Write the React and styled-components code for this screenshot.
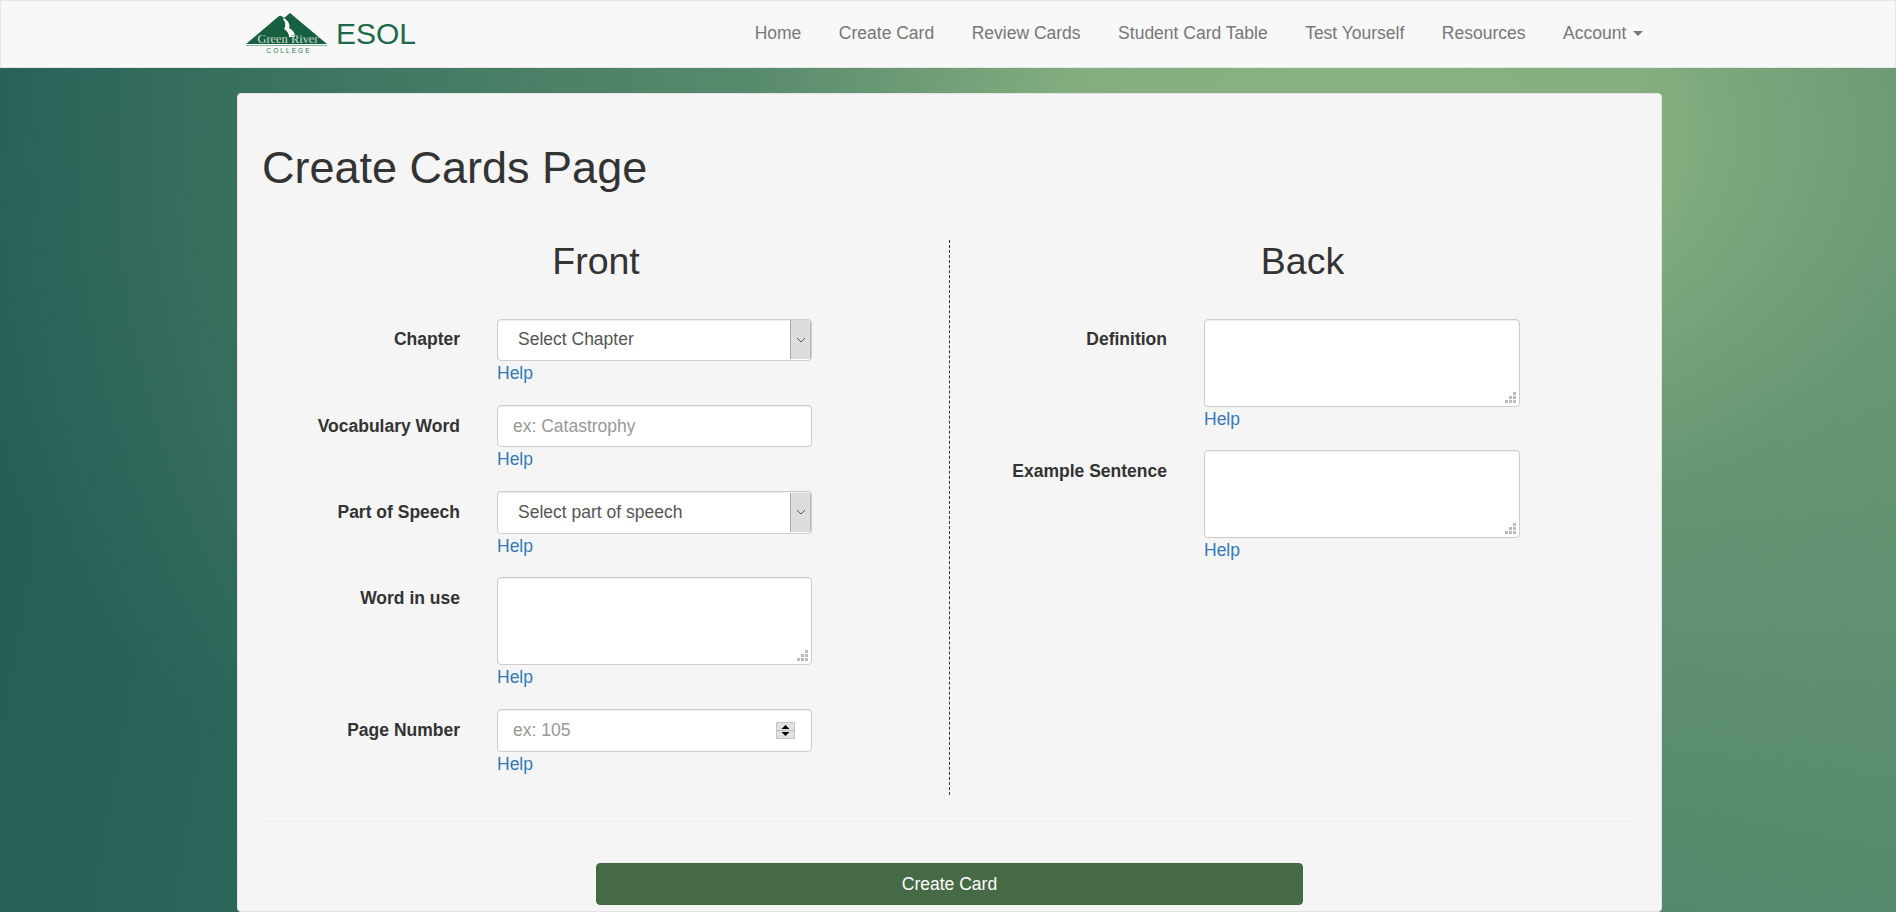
import React from "react";
import styled, { createGlobalStyle } from "styled-components";

const Global = createGlobalStyle`
  html, body { margin: 0; padding: 0; height: 912px; overflow: hidden; }
  body {
    font-family: "Liberation Sans", Arial, sans-serif;
    font-size: 17.5px;
    line-height: 25px;
    color: #333;
    background:
      radial-gradient(ellipse 1450px 1000px at 1360px 130px,
        rgba(138,179,130,1) 0%,
        rgba(138,179,130,.92) 20%,
        rgba(138,179,130,.68) 30%,
        rgba(138,179,130,.42) 42%,
        rgba(138,179,130,.15) 80%,
        rgba(138,179,130,0) 100%),
      linear-gradient(100deg, #225e55 0%, #50846a 100%);
  }
  * { box-sizing: border-box; }
`;

const Navbar = styled.nav`
  height: 68px;
  background: #f8f8f8;
  border: 1px solid #e7e7e7;
`;
const NavInner = styled.div`
  width: 1440px;
  margin: 0 auto;
  height: 66px;
  display: flex;
  align-items: center;
  justify-content: space-between;
  padding: 0 6px 0 18px;
`;
const Brand = styled.a`
  display: flex;
  align-items: center;
  gap: 8px;
  color: #1f6a4a;
  font-size: 30px;
  line-height: 1;
`;
const NavList = styled.ul`
  display: flex;
  margin: 0 0 2px;
  padding: 0;
  list-style: none;
`;
const NavItem = styled.li`
  padding: 0 18.75px;
  color: #777;
  font-size: 17.5px;
  line-height: 25px;
  display: flex;
  align-items: center;
`;
const Caret = styled.span`
  display: inline-block;
  margin-left: 7px;
  border-top: 5px solid #777;
  border-left: 5px solid transparent;
  border-right: 5px solid transparent;
`;
const Well = styled.main`
  width: 1425px;
  margin: 25px 234px 0 237px;
  background: #f5f5f5;
  border: 1px solid #e3e3e3;
  border-radius: 4px;
  padding: 0 24px;
  height: 819px;
  overflow: hidden;
`;
const PageTitle = styled.h1`
  margin: 0;
  padding-top: 49px;
  font-size: 45px;
  font-weight: 400;
  line-height: 49.5px;
`;
const Columns = styled.div`
  display: grid;
  grid-template-columns: 708px 706px;
  margin: 47.5px -20px 0;
  width: 1414px;
`;
const Column = styled.section`
  height: 555px;
  border-right: ${(p) => (p.$divided ? "1px dashed #333" : "0")};
  margin-left: ${(p) => (p.$divided ? "0" : "-1px")};
`;
const ColTitle = styled.h2`
  margin: 0 0 36.25px;
  padding: 1px 0 0 ${(p) => (p.$inset ? "1px" : "0")};
  text-align: center;
  font-size: 37.5px;
  font-weight: 400;
  line-height: 41.25px;
`;
const Field = styled.div`
  display: grid;
  grid-template-columns: 218px ${(p) => (p.$wide ? "316px" : "315px")};
  column-gap: 37px;
  margin-bottom: 18.75px;
`;
const Label = styled.label`
  text-align: right;
  font-weight: 700;
  padding-top: 8.75px;
  color: #333;
`;
const Control = styled.div`
  display: flex;
  flex-direction: column;
`;
const boxBase = `
  width: 100%;
  background: #fff;
  border: 1px solid #ccc;
  border-radius: 4px;
  box-shadow: inset 0 1px 1px rgba(0,0,0,.075);
  font-size: 17.5px;
  color: #555;
`;
const Select = styled.div`
  ${boxBase}
  height: 42.5px;
  display: flex;
  align-items: center;
  justify-content: space-between;
  padding-left: 20px;
  overflow: hidden;
`;
const SelectArrow = styled.span`
  width: 21px;
  height: 39px;
  background: #ddd;
  border-left: 1px solid #aaa;
  border-right: 1px solid #bbb;
  display: flex;
  align-items: center;
  justify-content: center;
`;
const Input = styled.div`
  ${boxBase}
  height: 42.5px;
  display: flex;
  align-items: center;
  justify-content: space-between;
  padding: 0 16px 0 15px;
  color: #999;
`;
const Spinner = styled.span`
  width: 19px;
  height: 17px;
  background: #e2e2e2;
  border: 1px solid #c4c4c4;
  display: flex;
  align-items: center;
  justify-content: center;
`;
const TextArea = styled.div`
  ${boxBase}
  height: 88px;
  position: relative;
`;
const Grip = styled.svg`
  position: absolute;
  right: 3px;
  bottom: 3px;
`;
const Help = styled.a`
  color: #337ab7;
  line-height: 25px;
`;
const Divider = styled.hr`
  margin: 25.5px 0 0;
  border: 0;
  border-top: 1px solid #eee;
`;
const Actions = styled.div`
  display: flex;
  justify-content: center;
  margin-top: 41px;
`;
const Submit = styled.button`
  width: 707px;
  height: 42.5px;
  padding: 1px 0 0;
  border: 1px solid #466a46;
  border-radius: 4px;
  background: #466a46;
  color: #fff;
  font: inherit;
  font-size: 17.5px;
`;

const Logo = () => (
  <svg width="82" height="42" viewBox="0 0 82 42" aria-hidden="true">
    <path fill="#17603f" d="M0 31 L33 3 Q35 2 38 5 L44 0 L81 31 Z" />
    <path fill="#f8f8f8" d="M38 5 Q45 10 43 15 Q49 18 49 24 L43 24 Q43 19 38 16 Q41 11 37 6 Z" />
    <text x="42" y="30" textAnchor="middle" fontFamily="Liberation Serif" fontSize="13" fill="#fff" stroke="#17603f" strokeWidth=".25" textLength="61" lengthAdjust="spacingAndGlyphs">Green River</text>
    <rect x="0" y="32" width="81" height="1" fill="#8ab39c" />
    <text x="42" y="40" textAnchor="middle" fontFamily="Liberation Sans" fontSize="6.5" fill="#27704d" textLength="43">COLLEGE</text>
  </svg>
);

const Chevron = () => (
  <svg width="10" height="6" viewBox="0 0 10 6"><path d="M1 1l4 4 4-4" fill="none" stroke="#555" strokeWidth="1" /></svg>
);

const GripIcon = () => (
  <Grip width="11" height="11" viewBox="0 0 11 11">
    <path fill="#bbb" d="M8 0h3v3H8zM4 4h3v3H4zM8 4h3v3H8zM0 8h3v3H0zM4 8h3v3H4zM8 8h3v3H8z" />
  </Grip>
);

const SpinIcon = () => (
  <Spinner>
    <svg width="17" height="15" viewBox="0 0 17 15">
      <path d="M8.5 2l4 4h-8zM4.5 9h8l-4 4z" fill="#000" />
      <rect x="0" y="7" width="17" height="1" fill="#bbb" />
    </svg>
  </Spinner>
);

const FormField = ({ label, wide, children }) => (
  <Field $wide={wide}>
    <Label>{label}</Label>
    <Control>
      {children}
      <Help>Help</Help>
    </Control>
  </Field>
);

const SelectBox = ({ text }) => (
  <Select>
    {text}
    <SelectArrow><Chevron /></SelectArrow>
  </Select>
);

const nav = ["Home", "Create Card", "Review Cards", "Student Card Table", "Test Yourself", "Resources"];

export default function App() {
  return (
    <>
      <Global />
      <Navbar>
        <NavInner>
          <Brand><Logo />ESOL</Brand>
          <NavList>
            {nav.map((n) => <NavItem key={n}>{n}</NavItem>)}
            <NavItem>Account<Caret /></NavItem>
          </NavList>
        </NavInner>
      </Navbar>
      <Well>
        <PageTitle>Create Cards Page</PageTitle>
        <Columns>
          <Column $divided>
            <ColTitle $inset>Front</ColTitle>
            <FormField label="Chapter"><SelectBox text="Select Chapter" /></FormField>
            <FormField label="Vocabulary Word"><Input>ex: Catastrophy</Input></FormField>
            <FormField label="Part of Speech"><SelectBox text="Select part of speech" /></FormField>
            <FormField label="Word in use"><TextArea><GripIcon /></TextArea></FormField>
            <FormField label="Page Number"><Input>ex: 105<SpinIcon /></Input></FormField>
          </Column>
          <Column>
            <ColTitle>Back</ColTitle>
            <FormField wide label="Definition"><TextArea><GripIcon /></TextArea></FormField>
            <FormField wide label="Example Sentence"><TextArea><GripIcon /></TextArea></FormField>
          </Column>
        </Columns>
        <Divider />
        <Actions><Submit>Create Card</Submit></Actions>
      </Well>
    </>
  );
}
